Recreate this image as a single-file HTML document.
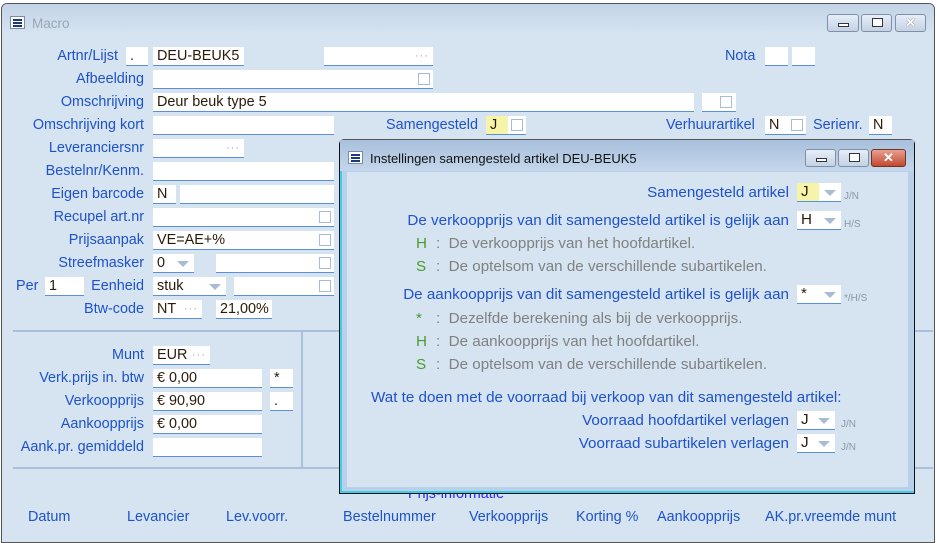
<!DOCTYPE html>
<html><head><meta charset="utf-8"><style>
*{box-sizing:border-box;margin:0;padding:0}
body{width:937px;height:529px;overflow:hidden;background:#fff;font-family:"Liberation Sans",sans-serif;font-size:14.4px;position:relative}
#win{position:absolute;left:1px;top:3px;width:934px;height:540px;border:1px solid #555;border-radius:6px 6px 0 0;background:#d6e4f2;overflow:hidden}
#tb{position:absolute;left:0;top:0;right:0;height:28px;background:linear-gradient(#c2d4e6,#d4e2f1)}
.abs{position:absolute}
.lbl{position:absolute;color:#1e52c8;white-space:nowrap;line-height:19px}
.r{text-align:right}
.f{position:absolute;background:#fff;border-bottom:1px solid #5b8fdc;height:19px;line-height:18px;color:#2a1a08;padding-left:4px;white-space:nowrap}
.cb{position:absolute;width:12px;height:12px;border:1px solid #a8bcd4;background:#fff;top:3px;right:3px}
.dots{position:absolute;right:4px;top:0;color:#90a8c8;font-size:11px;letter-spacing:1px}
.arr{position:absolute;right:5px;top:7px;width:0;height:0;border-left:6px solid transparent;border-right:6px solid transparent;border-top:6px solid #a8bcd4}
.icon{position:absolute;width:15px;height:13px;border:1px solid #7a8ca8;background:#fff}
.icon i{position:absolute;left:2px;right:2px;height:2px;background:#1a3a7a}
.btn{position:absolute;height:18px;border:1px solid #7f8fa6;border-radius:3px;background:linear-gradient(#e6eef8,#c4d2e4)}
.gray{color:#808080}
.grn{color:#4a9a2a}
.sm{position:absolute;font-size:10px;color:#8a97a8}
.dl{font-size:15.2px}
</style></head><body>
<div id="win">
<div id="tb"></div>
<div class="icon" style="left:8px;top:12px"><i style="top:2px"></i><i style="top:5px"></i><i style="top:8px"></i></div>
<div class="abs" style="left:30px;top:12px;color:#9aa6b4;font-size:13.5px">Macro</div>
<div class="btn" style="left:825px;top:10px;width:32px"><div class="abs" style="left:10px;top:8px;width:11px;height:4px;border:1px solid #334;background:#fff"></div></div>
<div class="btn" style="left:859px;top:10px;width:31px"><div class="abs" style="left:10px;top:3px;width:11px;height:9px;border:1px solid #334;background:#fff"></div></div>
<div class="btn" style="left:893px;top:10px;width:31px"><div class="abs" style="left:9px;top:0;color:#fff;font-weight:bold;font-size:13px;text-shadow:0 0 1px #333">✕</div></div>
</div>
<div style="position:absolute;left:0;top:0">
<div class="lbl r" style="left:0;width:118px;top:47px">Artnr/Lijst</div>
<div class="f" style="left:126px;top:47px;width:22px">.</div>
<div class="f" style="left:153px;top:47px;width:91px">DEU-BEUK5</div>
<div class="f" style="left:324px;top:47px;width:109px"><span class="dots">···</span></div>
<div class="lbl" style="left:725px;top:47px">Nota</div>
<div class="f" style="left:765px;top:47px;width:23px"></div>
<div class="f" style="left:792px;top:47px;width:23px"></div>

<div class="lbl r" style="left:0;width:144px;top:70px">Afbeelding</div>
<div class="f" style="left:153px;top:70px;width:280px"><span class="cb"></span></div>
<div class="lbl r" style="left:0;width:144px;top:93px">Omschrijving</div>
<div class="f" style="left:153px;top:93px;width:541px">Deur beuk type 5</div>
<div class="f" style="left:702px;top:93px;width:34px"><span class="cb" style="right:4px"></span></div>
<div class="lbl r" style="left:0;width:144px;top:116px">Omschrijving kort</div>
<div class="f" style="left:153px;top:116px;width:181px"></div>
<div class="lbl" style="left:386px;top:116px">Samengesteld</div>
<div class="f" style="left:486px;top:116px;width:40px;background:linear-gradient(90deg,#f6f4a8 0 22px,#fff 22px)">J<span class="cb"></span></div>
<div class="lbl" style="left:666px;top:116px">Verhuurartikel</div>
<div class="f" style="left:765px;top:116px;width:41px">N<span class="cb"></span></div>
<div class="lbl" style="left:813px;top:116px">Serienr.</div>
<div class="f" style="left:869px;top:116px;width:23px">N</div>

<div class="lbl r" style="left:0;width:144px;top:139px">Leveranciersnr</div>
<div class="f" style="left:153px;top:139px;width:91px"><span class="dots">···</span></div>
<div class="lbl r" style="left:0;width:144px;top:162px">Bestelnr/Kenm.</div>
<div class="f" style="left:153px;top:162px;width:181px"></div>
<div class="lbl r" style="left:0;width:144px;top:185px">Eigen barcode</div>
<div class="f" style="left:153px;top:185px;width:23px">N</div>
<div class="f" style="left:180px;top:185px;width:154px"></div>
<div class="lbl r" style="left:0;width:144px;top:208px">Recupel art.nr</div>
<div class="f" style="left:153px;top:208px;width:181px"><span class="cb"></span></div>
<div class="lbl r" style="left:0;width:144px;top:231px">Prijsaanpak</div>
<div class="f" style="left:153px;top:231px;width:181px">VE=AE+%<span class="cb"></span></div>
<div class="lbl r" style="left:0;width:144px;top:254px">Streefmasker</div>
<div class="f" style="left:153px;top:254px;width:41px">0<span class="arr"></span></div>
<div class="f" style="left:216px;top:254px;width:118px"><span class="cb"></span></div>
<div class="lbl" style="left:16px;top:277px">Per</div>
<div class="f" style="left:45px;top:277px;width:39px">1</div>
<div class="lbl r" style="left:60px;width:84px;top:277px">Eenheid</div>
<div class="f" style="left:153px;top:277px;width:73px">stuk<span class="arr"></span></div>
<div class="f" style="left:234px;top:277px;width:100px"><span class="cb"></span></div>
<div class="lbl r" style="left:0;width:144px;top:300px">Btw-code</div>
<div class="f" style="left:153px;top:300px;width:49px">NT<span class="dots">···</span></div>
<div class="f" style="left:216px;top:300px;width:56px">21,00%</div>

<div class="abs" style="left:13px;top:330px;width:920px;height:2px;background:#a8c0dc"></div>
<div class="abs" style="left:301px;top:330px;width:2px;height:139px;background:#a8c0dc"></div>
<div class="abs" style="left:13px;top:467px;width:920px;height:2px;background:#a8c0dc"></div>

<div class="lbl r" style="left:0;width:144px;top:346px">Munt</div>
<div class="f" style="left:153px;top:346px;width:57px">EUR<span class="dots">···</span></div>
<div class="lbl r" style="left:0;width:144px;top:369px">Verk.prijs in. btw</div>
<div class="f" style="left:153px;top:369px;width:109px">€ 0,00</div>
<div class="f" style="left:270px;top:369px;width:23px">*</div>
<div class="lbl r" style="left:0;width:144px;top:392px">Verkoopprijs</div>
<div class="f" style="left:153px;top:392px;width:109px">€ 90,90</div>
<div class="f" style="left:270px;top:392px;width:23px">.</div>
<div class="lbl r" style="left:0;width:144px;top:415px">Aankoopprijs</div>
<div class="f" style="left:153px;top:415px;width:109px">€ 0,00</div>
<div class="lbl r" style="left:0;width:144px;top:438px">Aank.pr. gemiddeld</div>
<div class="f" style="left:153px;top:438px;width:109px"></div>

<div class="lbl" style="left:408px;top:485px;color:#2a2af0">Prijs-informatie</div>
<div class="lbl" style="left:28px;top:508px">Datum</div>
<div class="lbl" style="left:127px;top:508px">Levancier</div>
<div class="lbl" style="left:226px;top:508px">Lev.voorr.</div>
<div class="lbl" style="left:343px;top:508px">Bestelnummer</div>
<div class="lbl" style="left:469px;top:508px">Verkoopprijs</div>
<div class="lbl" style="left:576px;top:508px">Korting %</div>
<div class="lbl" style="left:657px;top:508px">Aankoopprijs</div>
<div class="lbl" style="left:765px;top:508px">AK.pr.vreemde munt</div>
</div>

<!-- dialog -->
<div class="abs" style="left:339px;top:139px;width:576px;height:355px;border:1px solid #111;border-top-color:#555;border-radius:5px 5px 0 0;background:#b9d0ea;box-shadow:inset 0 -2px 0 #3cd0e8, inset 2px 0 0 #3cd0e8">
 <div class="abs" style="left:0;top:0;right:0;height:31px;background:linear-gradient(#a8c0dc,#c4d6ea)"></div>
 <div class="icon" style="left:8px;top:11px"><i style="top:2px"></i><i style="top:5px"></i><i style="top:8px"></i></div>
 <div class="abs" style="left:30px;top:11px;color:#111;font-size:13px">Instellingen samengesteld artikel DEU-BEUK5</div>
 <div class="btn" style="left:465px;top:9px;width:31px"><div class="abs" style="left:10px;top:8px;width:11px;height:4px;border:1px solid #334;background:#fff"></div></div>
 <div class="btn" style="left:498px;top:9px;width:31px"><div class="abs" style="left:10px;top:3px;width:11px;height:9px;border:1px solid #334;background:#fff"></div></div>
 <div class="btn" style="left:531px;top:9px;width:35px;background:linear-gradient(#e8a090,#c04830);border-color:#7a3020"><div class="abs" style="left:11px;top:0;color:#fff;font-weight:bold;font-size:13px">✕</div></div>
 <div class="abs" style="left:7px;top:32px;width:561px;height:315px;background:#d6e4f2"></div>
</div>
<div class="dl" style="position:absolute;left:0;top:0">
<div class="lbl r" style="left:350px;width:439px;top:183px">Samengesteld artikel</div>
<div class="f" style="left:797px;top:183px;width:44px;background:linear-gradient(90deg,#f6f4a8 0 22px,#fff 22px)">J<span class="arr"></span></div>
<div class="sm" style="left:844px;top:191px">J/N</div>
<div class="lbl r" style="left:340px;width:449px;top:211px">De verkoopprijs van dit samengesteld artikel is gelijk aan</div>
<div class="f" style="left:797px;top:211px;width:44px">H<span class="arr"></span></div>
<div class="sm" style="left:844px;top:219px">H/S</div>
<div class="lbl grn" style="left:416px;top:234px">H</div><div class="lbl gray" style="left:436px;top:234px">:&nbsp; De verkoopprijs van het hoofdartikel.</div>
<div class="lbl grn" style="left:416px;top:257px">S</div><div class="lbl gray" style="left:436px;top:257px">:&nbsp; De optelsom van de verschillende subartikelen.</div>
<div class="lbl r" style="left:340px;width:449px;top:285px">De aankoopprijs van dit samengesteld artikel is gelijk aan</div>
<div class="f" style="left:797px;top:285px;width:44px">*<span class="arr"></span></div>
<div class="sm" style="left:844px;top:293px">*/H/S</div>
<div class="lbl grn" style="left:416px;top:309px">*</div><div class="lbl gray" style="left:436px;top:309px">:&nbsp; Dezelfde berekening als bij de verkoopprijs.</div>
<div class="lbl grn" style="left:416px;top:332px">H</div><div class="lbl gray" style="left:436px;top:332px">:&nbsp; De aankoopprijs van het hoofdartikel.</div>
<div class="lbl grn" style="left:416px;top:355px">S</div><div class="lbl gray" style="left:436px;top:355px">:&nbsp; De optelsom van de verschillende subartikelen.</div>
<div class="lbl" style="left:371px;top:388px">Wat te doen met de voorraad bij verkoop van dit samengesteld artikel:</div>
<div class="lbl r" style="left:350px;width:439px;top:411px">Voorraad hoofdartikel verlagen</div>
<div class="f" style="left:797px;top:411px;width:38px">J<span class="arr"></span></div>
<div class="sm" style="left:841px;top:419px">J/N</div>
<div class="lbl r" style="left:350px;width:439px;top:434px">Voorraad subartikelen verlagen</div>
<div class="f" style="left:797px;top:434px;width:38px">J<span class="arr"></span></div>
<div class="sm" style="left:841px;top:442px">J/N</div>
</div>
</body></html>
